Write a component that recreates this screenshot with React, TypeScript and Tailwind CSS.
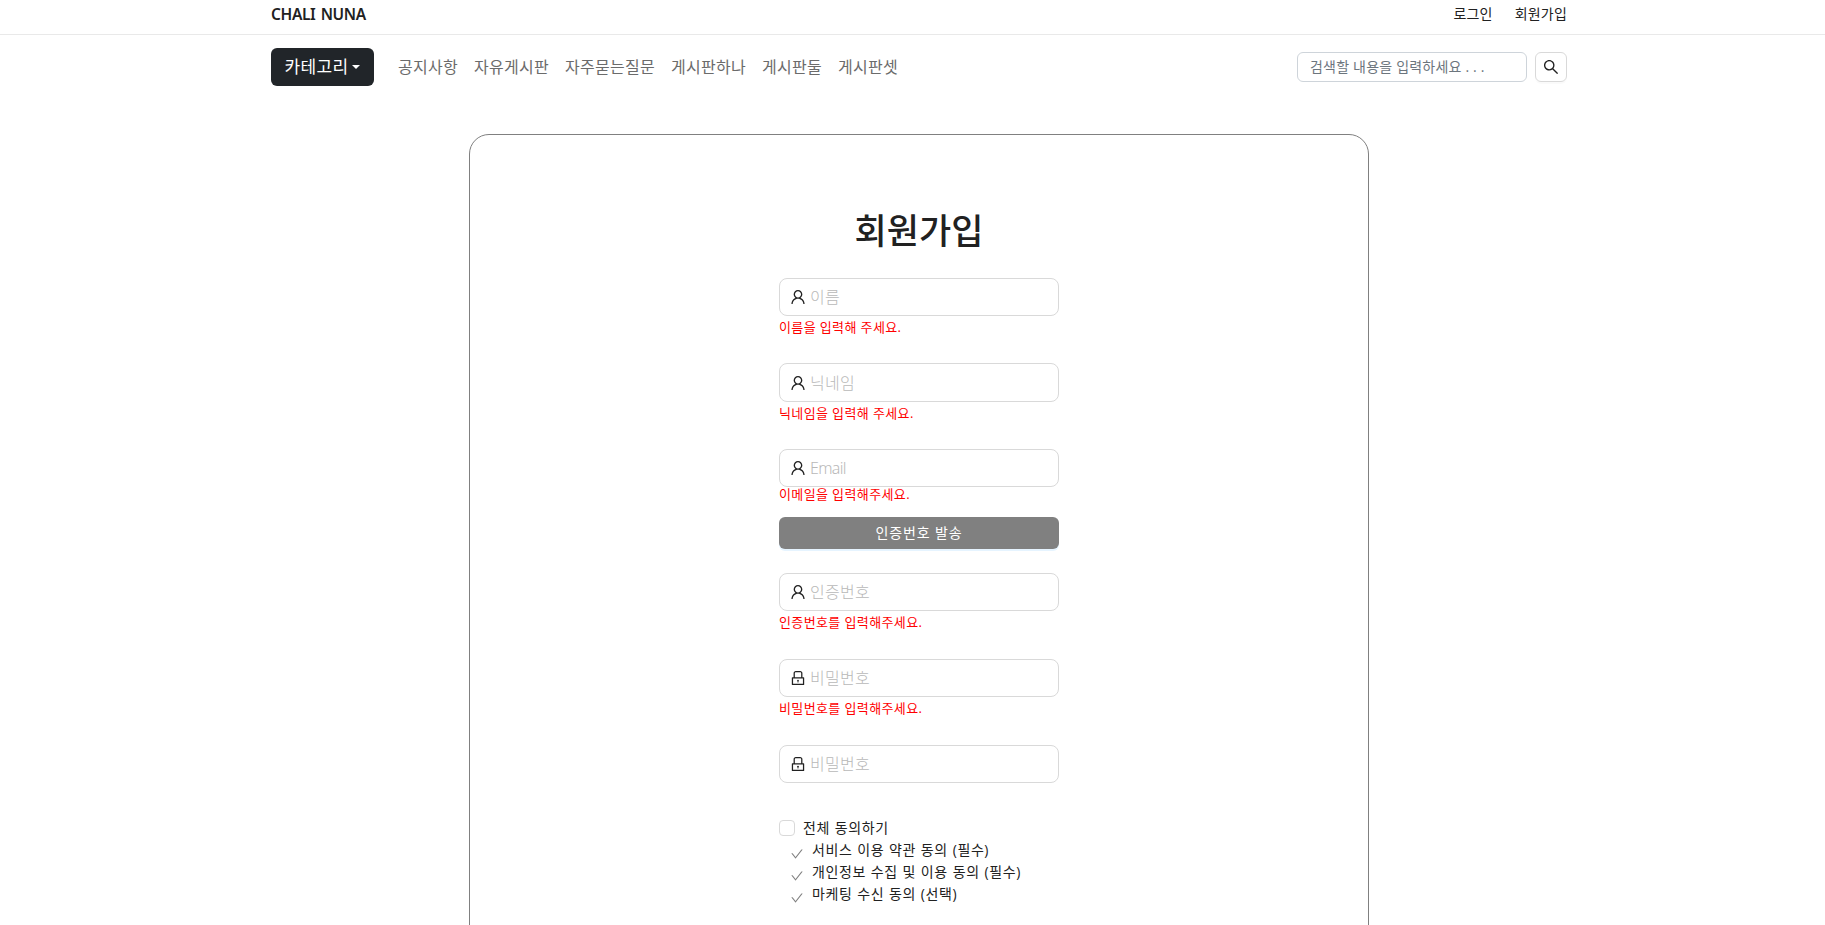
import { useState } from 'react'
import type { IconType } from 'react-icons'
import {
  AiOutlineCheck,
  AiOutlineLock,
  AiOutlineSearch,
  AiOutlineUser,
} from 'react-icons/ai'

const boards = [
  '공지사항',
  '자유게시판',
  '자주묻는질문',
  '게시판하나',
  '게시판둘',
  '게시판셋',
]

const terms = [
  '서비스 이용 약관 동의 (필수)',
  '개인정보 수집 및 이용 동의 (필수)',
  '마케팅 수신 동의 (선택)',
]

interface FieldProps {
  icon: IconType
  placeholder: string
  type?: string
  error?: string
  errorClass?: string
  inputClass?: string
}

/* ----------------------------------------
   Header
---------------------------------------- */
function TopBar() {
  return (
    <div className="h-[35px] border-b border-[#e9e9e9]">
      <div className="ml-[271px] w-[1296px] flex justify-between leading-[28px]">
        <a
          href="#"
          className="font-['Noto_Sans',sans-serif] text-[15.5px] leading-[29px] font-semibold tracking-[-0.35px] [word-spacing:1.5px]"
        >
          CHALI NUNA
        </a>
        <div className="flex gap-[22px] text-[14px] leading-[27px] tracking-[0.2px]">
          <a href="#">로그인</a>
          <a href="#">회원가입</a>
        </div>
      </div>
    </div>
  )
}

function NavBar() {
  return (
    <nav className="ml-[271px] w-[1296px] pt-[13px] flex items-center">
      <button className="w-[103px] h-[38px] rounded-md bg-[#212529] text-white text-[17px] tracking-[0.3px] flex items-center justify-center gap-1">
        카테고리
        <span className="border-x-[4.5px] border-x-transparent border-t-[4.5px] border-t-white" />
      </button>

      <ul className="ml-6 flex gap-4 text-[16px] leading-[24px] tracking-[0.28px] text-[#6b6b6b]">
        {boards.map(board => (
          <li key={board}>
            <a href="#">{board}</a>
          </li>
        ))}
      </ul>

      <form className="ml-auto flex gap-2">
        <input
          className="w-[230px] h-[30px] rounded-md border border-[#ced4da] px-3 pb-[2px] text-[14px] tracking-[0.2px] placeholder:text-[#6c757d] outline-none"
          placeholder="검색할 내용을 입력하세요 . . ."
        />
        <button
          type="button"
          className="w-8 h-[30px] rounded-md border border-[#d9d9d9] shadow-[0_2px_0_rgba(0,0,0,0.02)] flex items-center justify-center"
        >
          <AiOutlineSearch className="w-[18px] h-[18px]" />
        </button>
      </form>
    </nav>
  )
}

/* ----------------------------------------
   Sign up form
---------------------------------------- */
function Field({
  icon: Icon,
  placeholder,
  type = 'text',
  error,
  errorClass = 'mt-[2px]',
  inputClass = 'tracking-[0.28px]',
}: FieldProps) {
  return (
    <div>
      <label className="h-[38.3px] rounded-lg border border-[#d9d9d9] pl-[9px] pr-[11px] flex items-center gap-[3px]">
        <Icon className="w-[18px] h-[18px] shrink-0" />
        <input
          type={type}
          placeholder={placeholder}
          className={`${inputClass} min-w-0 flex-1 text-[16px] font-light placeholder:text-[#b8b8b8] outline-none`}
        />
      </label>
      {error && (
        <p className={`${errorClass} text-[13px] leading-[18px] tracking-[0.38px] text-[red]`}>
          {error}
        </p>
      )}
    </div>
  )
}

function SignUpForm() {
  const [agreeAll, setAgreeAll] = useState(false)

  return (
    <section className="mt-12 ml-[469px] w-[900px] h-[1000px] rounded-[20px] border border-[#808080] flex flex-col items-center">
      <h1 className="mt-[71px] h-[72px] text-[35px] leading-[50px] font-medium">회원가입</h1>

      <form className="w-[280px] flex flex-col">
        <div className="h-[85.4px]">
          <Field icon={AiOutlineUser} placeholder="이름" error="이름을 입력해 주세요." />
        </div>
        <div className="h-[85.8px]">
          <Field icon={AiOutlineUser} placeholder="닉네임" error="닉네임을 입력해 주세요." />
        </div>
        <div className="h-[67.8px]">
          <Field
            icon={AiOutlineUser}
            placeholder="Email"
            error="이메일을 입력해주세요."
            errorClass="-mt-[2px]"
            inputClass="font-['Noto_Sans'] tracking-[-0.7px]"
          />
        </div>
        <button
          type="button"
          className="mb-6 h-8 rounded-md bg-[#808080] text-white text-[14px] tracking-[0.9px] shadow-[0_2px_0_rgba(5,145,255,0.1)]"
        >
          인증번호 발송
        </button>
        <div className="h-[85.8px]">
          <Field icon={AiOutlineUser} placeholder="인증번호" error="인증번호를 입력해주세요." />
        </div>
        <div className="h-[85.8px]">
          <Field
            icon={AiOutlineLock}
            placeholder="비밀번호"
            type="password"
            error="비밀번호를 입력해주세요."
          />
        </div>
        <Field icon={AiOutlineLock} placeholder="비밀번호" type="password" />

        <label className="mt-[34px] flex items-center gap-2 text-[14px] leading-[22px] tracking-[0.6px] [word-spacing:0.6px]">
          <input
            type="checkbox"
            checked={agreeAll}
            onChange={e => setAgreeAll(e.target.checked)}
            className="appearance-none mt-px w-4 h-4 rounded border border-[#d9d9d9] checked:bg-[#1677ff]"
          />
          전체 동의하기
        </label>
        <ul className="pl-[11px] text-[14px] leading-[22px] tracking-[0.6px] [word-spacing:0.6px]">
          {terms.map(term => (
            <li key={term} className="flex gap-2 whitespace-nowrap">
              <AiOutlineCheck className="mt-[8px] w-[14px] h-[14px] text-[#808080]" />
              {term}
            </li>
          ))}
        </ul>
      </form>
    </section>
  )
}

export default function App() {
  return (
    <div className="w-full h-[925px] overflow-hidden bg-white text-[#212121] font-['Open_Sans','Noto_Sans_CJK_KR',sans-serif]">
      <TopBar />
      <NavBar />
      <SignUpForm />
    </div>
  )
}
